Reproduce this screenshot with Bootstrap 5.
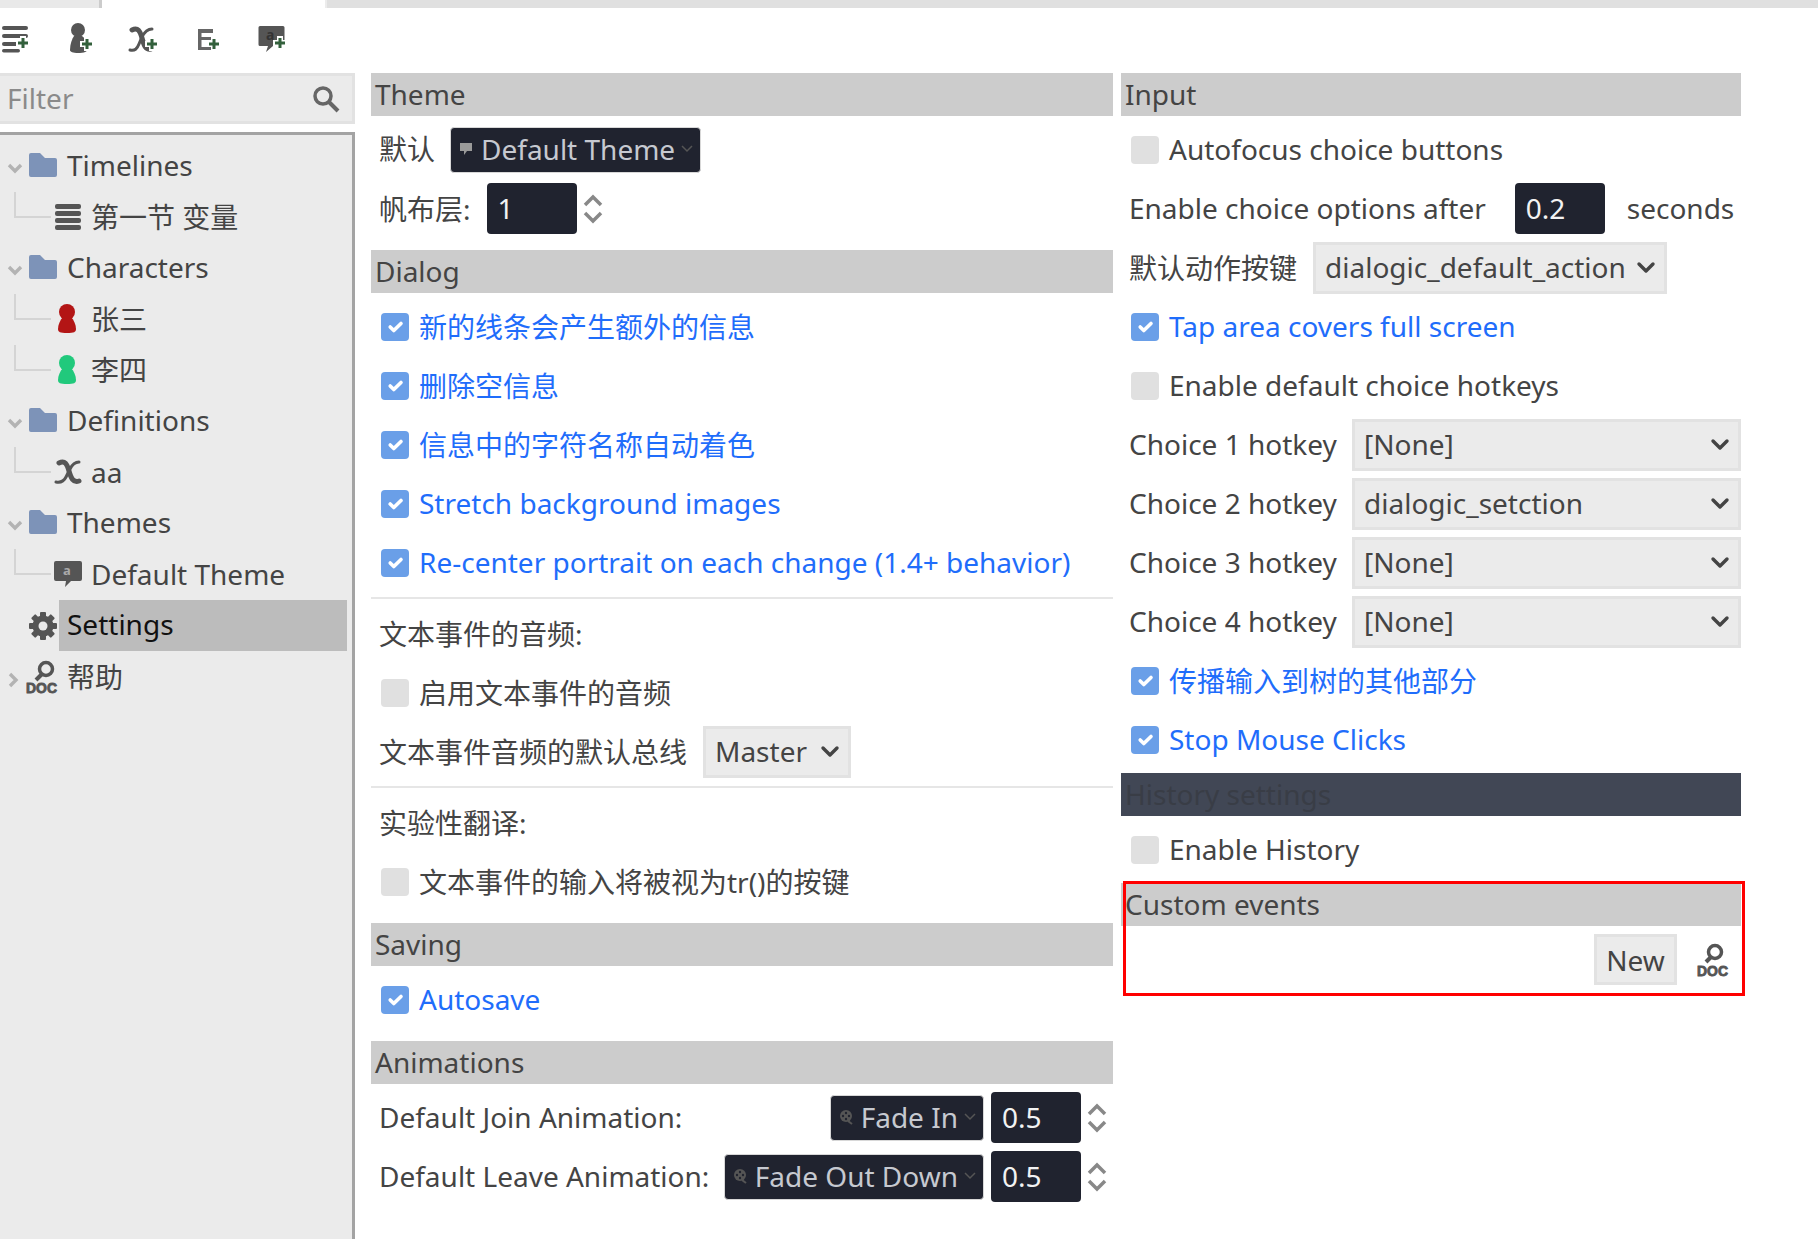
<!DOCTYPE html>
<html lang="zh">
<head>
<meta charset="utf-8">
<title>Settings</title>
<link href="https://cdn.jsdelivr.net/npm/bootstrap@5.3.0/dist/css/bootstrap.min.css" rel="stylesheet">
<style>
html,body{height:1239px;overflow:hidden;background:#fff}
body{font-family:"Noto Sans","Noto Sans CJK SC",sans-serif;font-size:28px;line-height:1;color:#444}
.tab-strip{height:8px}
.tab-a{width:102px;background:#e9e9e9;border-right:3px solid #ccc}
.tab-b{width:223px;background:#fff}
.tab-c{flex:1;background:#e0e0e0;border-left:2px solid #ececec}
.side{width:355px;flex:none;height:1231px}
.tool-row{height:65px;gap:32px}
.tool-row svg{width:32px;height:32px;margin-top:14px;display:block}
.filter-box{height:51px;background:#ebebeb;border:3px solid #e2e2e2;border-left:0;padding:0 12px 0 7px;color:#8a8a8a;margin-bottom:8px}
.filter-box span{padding-bottom:2px}
.tree-panel{flex:1;background:#ebebeb;border-top:3px solid #a3a3a3;border-right:3px solid #a3a3a3;padding-top:6px}
.tree-row{height:51px;white-space:nowrap}
.row-folder{padding-bottom:4px}
.row-leaf{padding-bottom:2px}
.twist{width:29px;flex:none;padding-left:7px}
.node-ic{width:28px;flex:none;margin-right:10px}
.elbow{width:37px;height:26px;margin-left:14px;flex:none;align-self:flex-start;border-left:2px solid #d4d4d4;border-bottom:2px solid #d4d4d4;margin-right:3px}
.leaf-ic{width:28px;flex:none;margin-right:9px}
.gear-slot{width:28px;flex:none;margin-right:2px}
.sel-bar{width:288px;height:51px;background:#bcbcbc;color:#111;padding:0 0 4px 8px}
.main-area{gap:8px;padding-left:16px;padding-top:65px;height:1231px}
.col-l{width:742px;flex:none;gap:8px}
.col-r{width:620px;flex:none;gap:8px}
.sec{height:43px;background:#ccc;padding-left:4px;line-height:42px;margin:0;font-size:28px;font-weight:400;color:#444}
.sec-dark{background:#414755;color:#393d46}
.sec-gap{margin-top:8px}
.ln{height:51px;padding-left:8px;white-space:nowrap;margin:0}
.lat{padding-bottom:2px}
.lat>input,.lat>select,.lat>button,.lat>svg{margin-bottom:-2px}
.cut{height:2px;background:#e6e6e6;margin:1px 0}
.form-check-input.tick{width:28px;height:28px;margin:0 10px 0 2px;flex:none;background-color:#e0e0e0;border:0;border-radius:4px;float:none}
.lat>.form-check-input.tick{margin-bottom:-2px}
.form-check-input.tick:checked{background-color:#6a9fe8;background-size:24px}
.on-txt{color:#1f6dfb}
.spin-in.form-control{width:90px;height:51px;padding:0 0 2px 11px;background:#20232f;border:0;border-radius:4px;color:#f2f2f2;font-size:28px;flex:none}
.arrows{width:20px;height:30px;margin-left:6px;flex:none}
.end-gap{width:6px;flex:none}
.lead-15{margin-left:15px}
.lead-16{margin-left:16px}
.after-label{margin-left:29px}
.sec-label{margin-left:22px;margin-right:8px}
.gap-7{margin-left:7px}
.dark-dd.btn{height:46px;background:#20232f;color:#c6c9d0;border:1px solid #d8d8d8;border-radius:4px;font-size:28px;padding:0 7px 2px 8px;display:flex;align-items:center;white-space:nowrap;line-height:1;flex:none}
.dark-dd svg{flex:none}
.dd-caret{margin-left:6px}
.plain-sel.form-select{height:52px;background-color:#ebebeb;border:3px solid #e2e2e2;border-radius:0;color:#444;font-size:28px;padding:0 30px 2px 9px;flex:none;line-height:normal;background-position:right 5px center;background-size:26px 26px;background-image:url("data:image/svg+xml,%3csvg xmlns='http://www.w3.org/2000/svg' viewBox='0 0 26 26'%3e%3cpath fill='none' stroke='%23444' stroke-width='3.4' stroke-linecap='round' stroke-linejoin='round' d='M6 9l7 7 7-7'/%3e%3c/svg%3e")}
.w-master{width:148px}.w-action{width:354px}.w-choice{width:389px}
.new-btn.btn{width:83px;height:51px;background:#ebebeb;border:3px solid #e2e2e2;border-radius:0;color:#444;font-size:28px;padding:0;line-height:1}
.event-wrap{position:relative;gap:8px}
.red-frame{position:absolute;left:2px;right:-4px;top:-2px;bottom:-11px;border:3px solid #f00;pointer-events:none}
.ev-tools{height:51px;padding-right:12px;gap:19px}
.doc-ic{display:block;overflow:visible}
.doc-ic text{font-family:"Liberation Sans",sans-serif;font-weight:700;font-size:15px;fill:#555;stroke:#555;stroke-width:.9px}
.shift-l{margin-left:-3px}
</style>
</head>
<body>
<div class="tab-strip d-flex"><div class="tab-a"></div><div class="tab-b"></div><div class="tab-c"></div></div>
<div class="d-flex">
<aside class="side d-flex flex-column">
  <div class="tool-row d-flex">
    <svg viewBox="0 0 32 32"><g fill="#555"><rect x="2" y="4" width="26" height="4" rx="2"/><rect x="2" y="12" width="26" height="4" rx="2"/><rect x="2" y="20" width="18" height="4" rx="2"/><rect x="2" y="27" width="18" height="3.500" rx="1.700"/></g><path d="M23 14v14M16 21h14" stroke="#fff" stroke-width="6"/><path d="M23 16v10M18 21h10" stroke="#33603c" stroke-width="3"/></svg>
    <svg viewBox="0 0 32 32"><g fill="#555"><circle cx="14" cy="8" r="7"/><path d="M10 14h8c4 3 6 8 6 12 0 4-4 5-10 5-5 0-8-1-8-3 0-6 2-11 4-14z"/></g><path d="M23 15v14M16 22h14" stroke="#fff" stroke-width="6"/><path d="M23 17v10M18 22h10" stroke="#33603c" stroke-width="3"/></svg>
    <svg viewBox="0 0 32 32"><g fill="none" stroke="#555" stroke-linecap="round"><path d="M4 8c6-3 8 1 10 8s3 12 9 11" stroke-width="5"/><path d="M24 7c-4 0-7 2-10 8l-3 7c-2 5-4 7-9 6" stroke-width="3"/></g><path d="M24 15v14M17 22h14" stroke="#fff" stroke-width="6"/><path d="M24 17v10M19 22h10" stroke="#33603c" stroke-width="3"/></svg>
    <svg viewBox="0 0 32 32"><path d="M6 7h15v4H9.500v4H20v3H9.500v7H20v3H6z" fill="#666"/><path d="M22 15v14M15 22h14" stroke="#fff" stroke-width="6"/><path d="M22 17v10M17 22h10" stroke="#33603c" stroke-width="3"/></svg>
    <svg viewBox="0 0 32 32"><path d="M4 4h23a1.500 1.500 0 0 1 1.500 1.500v17a1.500 1.500 0 0 1-1.500 1.500H17l-7 6 2-6H4a1.500 1.500 0 0 1-1.500-1.500v-17A1.500 1.500 0 0 1 4 4z" fill="#555"/><text x="10" y="18" font-family="Noto Sans" font-weight="700" font-size="14" fill="#333">a</text><path d="M24 14v14M17 21h14" stroke="#fff" stroke-width="6"/><path d="M24 16v10M19 21h10" stroke="#33603c" stroke-width="3"/></svg>
  </div>
  <div class="filter-box d-flex align-items-center justify-content-between"><span>Filter</span>
    <svg width="28" height="28" viewBox="0 0 28 28"><circle cx="11" cy="11" r="8" fill="none" stroke="#666" stroke-width="3.5"/><path d="M17 17l9 9" stroke="#666" stroke-width="4"/></svg></div>
  <div class="tree-panel">
    <div class="tree-row row-folder d-flex align-items-center">
      <span class="twist"><svg width="16" height="16" viewBox="0 0 16 16"><path d="M2 5l6 6 6-6" fill="none" stroke="#b3b3b3" stroke-width="3.4"/></svg></span>
      <span class="node-ic"><svg width="28" height="24" viewBox="0 0 28 24" class="d-block"><path d="M0 2a2 2 0 0 1 2-2h9l5 5h10a2 2 0 0 1 2 2v15a2 2 0 0 1-2 2H2a2 2 0 0 1-2-2z" fill="#7d93b8"/></svg></span>Timelines</div>
    <div class="tree-row row-leaf d-flex align-items-center"><span class="elbow"></span>
      <span class="leaf-ic"><svg width="28" height="26" viewBox="0 0 28 26" class="d-block"><g fill="#555"><rect x="1" y="0" width="26" height="5" rx="2"/><rect x="1" y="7" width="26" height="5" rx="2"/><rect x="1" y="14" width="26" height="5" rx="2"/><rect x="1" y="21" width="26" height="5" rx="2"/></g></svg></span>第一节 变量</div>
    <div class="tree-row row-folder d-flex align-items-center">
      <span class="twist"><svg width="16" height="16" viewBox="0 0 16 16"><path d="M2 5l6 6 6-6" fill="none" stroke="#b3b3b3" stroke-width="3.4"/></svg></span>
      <span class="node-ic"><svg width="28" height="24" viewBox="0 0 28 24" class="d-block"><path d="M0 2a2 2 0 0 1 2-2h9l5 5h10a2 2 0 0 1 2 2v15a2 2 0 0 1-2 2H2a2 2 0 0 1-2-2z" fill="#7d93b8"/></svg></span>Characters</div>
    <div class="tree-row row-leaf d-flex align-items-center"><span class="elbow"></span>
      <span class="leaf-ic"><svg width="28" height="30" viewBox="0 0 28 30" class="d-block"><g fill="#b31515"><circle cx="13" cy="8" r="8"/><path d="M9 13h8c3 3 5 8 5 12 0 3-2 4-9 4s-9-1-9-4c0-4 2-9 5-12z"/></g></svg></span>张三</div>
    <div class="tree-row row-leaf d-flex align-items-center"><span class="elbow"></span>
      <span class="leaf-ic"><svg width="28" height="30" viewBox="0 0 28 30" class="d-block"><g fill="#21c97c"><circle cx="13" cy="8" r="8"/><path d="M9 13h8c3 3 5 8 5 12 0 3-2 4-9 4s-9-1-9-4c0-4 2-9 5-12z"/></g></svg></span>李四</div>
    <div class="tree-row row-folder d-flex align-items-center">
      <span class="twist"><svg width="16" height="16" viewBox="0 0 16 16"><path d="M2 5l6 6 6-6" fill="none" stroke="#b3b3b3" stroke-width="3.4"/></svg></span>
      <span class="node-ic"><svg width="28" height="24" viewBox="0 0 28 24" class="d-block"><path d="M0 2a2 2 0 0 1 2-2h9l5 5h10a2 2 0 0 1 2 2v15a2 2 0 0 1-2 2H2a2 2 0 0 1-2-2z" fill="#7d93b8"/></svg></span>Definitions</div>
    <div class="tree-row row-leaf d-flex align-items-center"><span class="elbow"></span>
      <span class="leaf-ic"><svg width="28" height="26" viewBox="0 0 28 26" class="d-block"><g fill="none" stroke="#555" stroke-linecap="round"><path d="M5 4c6-3 8 1 10 8s4 12 10 10" stroke-width="5"/><path d="M25 3c-3 0-6 1-9 7l-4 8c-2 4-5 6-10 5" stroke-width="3"/></g></svg></span>aa</div>
    <div class="tree-row row-folder d-flex align-items-center">
      <span class="twist"><svg width="16" height="16" viewBox="0 0 16 16"><path d="M2 5l6 6 6-6" fill="none" stroke="#b3b3b3" stroke-width="3.4"/></svg></span>
      <span class="node-ic"><svg width="28" height="24" viewBox="0 0 28 24" class="d-block"><path d="M0 2a2 2 0 0 1 2-2h9l5 5h10a2 2 0 0 1 2 2v15a2 2 0 0 1-2 2H2a2 2 0 0 1-2-2z" fill="#7d93b8"/></svg></span>Themes</div>
    <div class="tree-row row-leaf d-flex align-items-center"><span class="elbow"></span>
      <span class="leaf-ic"><svg width="28" height="26" viewBox="0 0 28 26" class="d-block"><path d="M2 0h24a2 2 0 0 1 2 2v16a2 2 0 0 1-2 2H17l-6 6 1-6H2a2 2 0 0 1-2-2V2a2 2 0 0 1 2-2z" fill="#555"/><text x="9" y="14" font-family="Noto Sans" font-weight="700" font-size="13" fill="#aaa">a</text></svg></span>Default Theme</div>
    <div class="tree-row d-flex align-items-center">
      <span class="twist"></span>
      <span class="gear-slot"><svg width="28" height="28" viewBox="-14 -14 28 28" class="d-block"><g fill="#555"><circle r="10.500"/><rect x="-3" y="-14" width="6" height="28" rx="1"/><rect x="-3" y="-14" width="6" height="28" rx="1" transform="rotate(45)"/><rect x="-3" y="-14" width="6" height="28" rx="1" transform="rotate(90)"/><rect x="-3" y="-14" width="6" height="28" rx="1" transform="rotate(135)"/></g><circle r="4.500" fill="#ebebeb"/></svg></span>
      <span class="sel-bar d-flex align-items-center">Settings</span></div>
    <div class="tree-row d-flex align-items-center">
      <span class="twist"><svg width="12" height="16" viewBox="0 0 12 16"><path d="M3 2l6 6-6 6" fill="none" stroke="#b3b3b3" stroke-width="3.4"/></svg></span>
      <span class="node-ic"><svg width="31" height="32" viewBox="0 0 31 32" class="doc-ic shift-l"><circle cx="20" cy="8" r="6.500" fill="none" stroke="#555" stroke-width="3.5"/><path d="M16 13l-6 6" stroke="#555" stroke-width="4"/><text x="0" y="32" textLength="31" lengthAdjust="spacingAndGlyphs">DOC</text></svg></span>帮助</div>
  </div>
</aside>
<main class="main-area d-flex">
  <div class="col-l d-flex flex-column">
    <h2 class="sec">Theme</h2>
    <div class="ln lat d-flex align-items-center">默认<button type="button" class="dark-dd btn lead-15"><svg width="14" height="14" viewBox="0 0 14 14" class="me-2"><path d="M1 1h12v8H8l-3 4V9H1z" fill="#9a9a9a"/></svg>Default Theme<svg width="12" height="8" viewBox="0 0 12 8" class="dd-caret"><path d="M1 1l5 5 5-5" fill="none" stroke="#555" stroke-width="1.500"/></svg></button></div>
    <div class="ln d-flex align-items-center">帆布层:<input class="spin-in form-control lead-16" value="1"><svg class="arrows" viewBox="0 0 20 30"><path d="M2 11l8-8 8 8M2 19l8 8 8-8" fill="none" stroke="#888" stroke-width="3.500"/></svg></div>
    <h2 class="sec sec-gap">Dialog</h2>
    <label class="ln d-flex align-items-center on-txt"><input class="form-check-input tick" type="checkbox" checked>新的线条会产生额外的信息</label>
    <label class="ln d-flex align-items-center on-txt"><input class="form-check-input tick" type="checkbox" checked>删除空信息</label>
    <label class="ln d-flex align-items-center on-txt"><input class="form-check-input tick" type="checkbox" checked>信息中的字符名称自动着色</label>
    <label class="ln lat d-flex align-items-center on-txt"><input class="form-check-input tick" type="checkbox" checked>Stretch background images</label>
    <label class="ln lat d-flex align-items-center on-txt"><input class="form-check-input tick" type="checkbox" checked>Re-center portrait on each change (1.4+ behavior)</label>
    <div class="cut"></div>
    <div class="ln d-flex align-items-center">文本事件的音频:</div>
    <label class="ln d-flex align-items-center"><input class="form-check-input tick" type="checkbox">启用文本事件的音频</label>
    <div class="ln d-flex align-items-center">文本事件音频的默认总线<select class="plain-sel form-select lead-16 w-master"><option>Master</option></select></div>
    <div class="cut"></div>
    <div class="ln d-flex align-items-center">实验性翻译:</div>
    <label class="ln d-flex align-items-center"><input class="form-check-input tick" type="checkbox">文本事件的输入将被视为tr()的按键</label>
    <h2 class="sec sec-gap">Saving</h2>
    <label class="ln lat d-flex align-items-center on-txt"><input class="form-check-input tick" type="checkbox" checked>Autosave</label>
    <h2 class="sec sec-gap">Animations</h2>
    <div class="ln lat d-flex align-items-center">Default Join Animation:
      <button type="button" class="dark-dd btn ms-auto"><svg width="14" height="16" viewBox="0 0 14 16" class="me-2"><circle cx="7" cy="7" r="6" fill="#555"/><circle cx="7" cy="4" r="1.200" fill="#20232f"/><circle cx="7" cy="10" r="1.200" fill="#20232f"/><circle cx="4" cy="7" r="1.200" fill="#20232f"/><circle cx="10" cy="7" r="1.200" fill="#20232f"/><path d="M9 12l4 3" stroke="#555" stroke-width="2"/></svg>Fade In<svg width="12" height="8" viewBox="0 0 12 8" class="dd-caret"><path d="M1 1l5 5 5-5" fill="none" stroke="#555" stroke-width="1.500"/></svg></button>
      <input class="spin-in form-control gap-7" value="0.5"><svg class="arrows" viewBox="0 0 20 30"><path d="M2 11l8-8 8 8M2 19l8 8 8-8" fill="none" stroke="#888" stroke-width="3.500"/></svg><span class="end-gap"></span></div>
    <div class="ln lat d-flex align-items-center">Default Leave Animation:
      <button type="button" class="dark-dd btn ms-auto"><svg width="14" height="16" viewBox="0 0 14 16" class="me-2"><circle cx="7" cy="7" r="6" fill="#555"/><circle cx="7" cy="4" r="1.200" fill="#20232f"/><circle cx="7" cy="10" r="1.200" fill="#20232f"/><circle cx="4" cy="7" r="1.200" fill="#20232f"/><circle cx="10" cy="7" r="1.200" fill="#20232f"/><path d="M9 12l4 3" stroke="#555" stroke-width="2"/></svg>Fade Out Down<svg width="12" height="8" viewBox="0 0 12 8" class="dd-caret"><path d="M1 1l5 5 5-5" fill="none" stroke="#555" stroke-width="1.500"/></svg></button>
      <input class="spin-in form-control gap-7" value="0.5"><svg class="arrows" viewBox="0 0 20 30"><path d="M2 11l8-8 8 8M2 19l8 8 8-8" fill="none" stroke="#888" stroke-width="3.500"/></svg><span class="end-gap"></span></div>
  </div>
  <div class="col-r d-flex flex-column">
    <h2 class="sec">Input</h2>
    <label class="ln lat d-flex align-items-center"><input class="form-check-input tick" type="checkbox">Autofocus choice buttons</label>
    <div class="ln lat d-flex align-items-center">Enable choice options after<input class="spin-in form-control after-label" value="0.2"><span class="sec-label">seconds</span></div>
    <div class="ln d-flex align-items-center">默认动作按键<select class="plain-sel form-select lead-16 w-action"><option>dialogic_default_action</option></select></div>
    <label class="ln lat d-flex align-items-center on-txt"><input class="form-check-input tick" type="checkbox" checked>Tap area covers full screen</label>
    <label class="ln lat d-flex align-items-center"><input class="form-check-input tick" type="checkbox">Enable default choice hotkeys</label>
    <div class="ln lat d-flex align-items-center justify-content-between">Choice 1 hotkey<select class="plain-sel form-select w-choice"><option>[None]</option></select></div>
    <div class="ln lat d-flex align-items-center justify-content-between">Choice 2 hotkey<select class="plain-sel form-select w-choice"><option>dialogic_setction</option></select></div>
    <div class="ln lat d-flex align-items-center justify-content-between">Choice 3 hotkey<select class="plain-sel form-select w-choice"><option>[None]</option></select></div>
    <div class="ln lat d-flex align-items-center justify-content-between">Choice 4 hotkey<select class="plain-sel form-select w-choice"><option>[None]</option></select></div>
    <label class="ln d-flex align-items-center on-txt"><input class="form-check-input tick" type="checkbox" checked>传播输入到树的其他部分</label>
    <label class="ln lat d-flex align-items-center on-txt"><input class="form-check-input tick" type="checkbox" checked>Stop Mouse Clicks</label>
    <h2 class="sec sec-dark">History settings</h2>
    <label class="ln lat d-flex align-items-center"><input class="form-check-input tick" type="checkbox">Enable History</label>
    <div class="event-wrap d-flex flex-column">
      <h2 class="sec">Custom events</h2>
      <div class="ev-tools d-flex align-items-center justify-content-end">
        <button type="button" class="new-btn btn">New</button>
        <svg width="33" height="32" viewBox="0 0 31 32" class="doc-ic"><circle cx="18" cy="8" r="6.500" fill="none" stroke="#555" stroke-width="3.5"/><path d="M14 13l-5 5" stroke="#555" stroke-width="4"/><text x="0" y="32" textLength="31" lengthAdjust="spacingAndGlyphs">DOC</text></svg>
      </div>
      <div class="red-frame"></div>
    </div>
  </div>
</main>
</div>
<script src="https://cdn.jsdelivr.net/npm/bootstrap@5.3.0/dist/js/bootstrap.bundle.min.js"></script>
</body>
</html>
